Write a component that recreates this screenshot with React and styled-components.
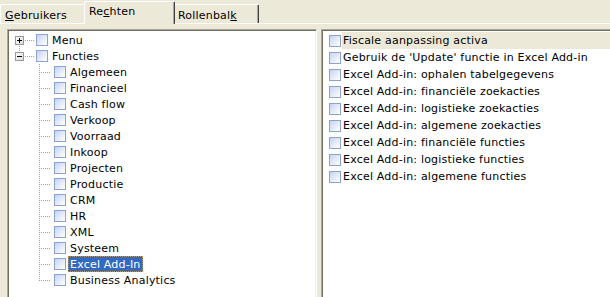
import React from "react";
import styled, { createGlobalStyle } from "styled-components";

const tabs = [
    { label: "Gebruikers", key: "G", pre: "", post: "ebruikers", width: 86 },
    { label: "Rechten", pre: "Re", key: "c", post: "hten", width: 91, active: true },
    { label: "Rollenbalk", pre: "Rollenbal", key: "k", post: "", width: 86 },
];

const functies = [
    "Algemeen",
    "Financieel",
    "Cash flow",
    "Verkoop",
    "Voorraad",
    "Inkoop",
    "Projecten",
    "Productie",
    "CRM",
    "HR",
    "XML",
    "Systeem",
    "Excel Add-In",
    "Business Analytics",
];

const rechten = [
    "Fiscale aanpassing activa",
    "Gebruik de 'Update' functie in Excel Add-in",
    "Excel Add-in: ophalen tabelgegevens",
    "Excel Add-in: financiële zoekacties",
    "Excel Add-in: logistieke zoekacties",
    "Excel Add-in: algemene zoekacties",
    "Excel Add-in: financiële functies",
    "Excel Add-in: logistieke functies",
    "Excel Add-in: algemene functies",
];

const GlobalStyle = createGlobalStyle`
    html, body {
        margin: 0;
        padding: 0;
        overflow: hidden;
        background: #ECE9D8;
    }
    body {
        font-family: "DejaVu Sans", Verdana, sans-serif;
        font-size: 11px;
        letter-spacing: 0.2px;
        color: #000;
    }
`;

const Page = styled.div`
    width: 620px;
    height: 297px;
    display: flex;
    flex-direction: column;
    background: #ECE9D8;
`;

const TabStrip = styled.div`
    height: 23px;
    display: flex;
    align-items: flex-start;
    flex: none;
`;

const Tab = styled.div`
    position: relative;
    box-sizing: border-box;
    width: ${(p) => p.$width}px;
    margin: ${(p) => (p.$active ? "1px -2px -1px" : "4px 0 0")};
    height: ${(p) => (p.$active ? 23 : 19)}px;
    padding: ${(p) => (p.$active ? "3px 0 0 4px" : "4px 0 0 4px")};
    background: #ECE9D8;
    border-top: 1px solid #FFFFFF;
    border-left: 1px solid #FFFFFF;
    border-right: 1px solid #404040;
    box-shadow: inset -1px 0 #ACA899;
    border-top-left-radius: 2px;
    border-top-right-radius: 2px;
    z-index: ${(p) => (p.$active ? 2 : 1)};
    line-height: 13px;
    white-space: nowrap;
`;

const TabPage = styled.div`
    flex: 1;
    display: flex;
    gap: 4px;
    padding: 5px 0 0 7px;
    border-top: 1px solid #FFFFFF;
    min-height: 0;
`;

const Sunken = styled.div`
    box-sizing: border-box;
    height: 290px;
    background: #FFFFFF;
    border: 1px solid;
    border-color: #ACA899 #FFFFFF #FFFFFF #ACA899;
    box-shadow: inset 1px 1px #716F64, inset -1px -1px #F1EFE2;
    padding: 2px 2px 0;
    overflow: hidden;
`;

const TreePanel = styled(Sunken)`
    width: 310px;
    flex: none;
`;

const ListPanel = styled(Sunken)`
    flex: 1;
`;

const TreeRow = styled.div`
    height: 16px;
    display: flex;
    align-items: center;
    padding-left: ${(p) => p.$indent}px;
`;

const dots = (dir) =>
    `repeating-linear-gradient(${dir}, #A0A0A0 0 1px, transparent 1px 2px)`;

const Gutter = styled.span`
    position: relative;
    flex: none;
    align-self: stretch;
    width: ${(p) => p.$w}px;
    &::before {
        content: "";
        position: absolute;
        left: ${(p) => p.$x}px;
        width: 1px;
        top: ${(p) => (p.$v === "down" ? 8 : 0)}px;
        height: ${(p) => (p.$v === "full" ? 16 : 8)}px;
        background: ${dots("to bottom")};
    }
    &::after {
        content: "";
        position: absolute;
        left: ${(p) => p.$x}px;
        top: 8px;
        height: 1px;
        width: ${(p) => p.$h}px;
        background: ${dots("to right")};
    }
`;

const Expander = styled.svg`
    position: absolute;
    left: ${(p) => p.$x - 4}px;
    top: 4px;
    z-index: 1;
`;

const Check = styled.span`
    box-sizing: border-box;
    flex: none;
    width: 12px;
    height: 12px;
    border: 1px solid #8AA3D4;
    background: linear-gradient(135deg, #C6D3F0 0%, #E4EAF8 50%, #FFFFFF 100%);
`;

const TreeLabel = styled.span`
    box-sizing: border-box;
    height: 16px;
    margin-left: 2px;
    padding: 1px 1px 0;
    line-height: 13px;
    white-space: nowrap;
    border: 1px ${(p) => (p.$selected ? "dotted #CE953A" : "solid transparent")};
    background: ${(p) => (p.$selected ? "#316AC5" : "transparent")};
    color: ${(p) => (p.$selected ? "#FFFFFF" : "#000000")};
`;

const ListRow = styled.div`
    height: 17px;
    display: flex;
    align-items: center;
    padding-left: 5px;
`;

const ListLabel = styled.span`
    flex: 1;
    align-self: stretch;
    margin-left: 1px;
    padding: 1px 0 0 1px;
    line-height: 16px;
    white-space: nowrap;
    background: ${(p) => (p.$hot ? "#ECE9D8" : "transparent")};
`;

function ExpanderBox({ x, open }) {
    const id = open ? "eg1" : "eg0";
    return (
        <Expander $x={x} width="9" height="9" viewBox="0 0 9 9">
            <defs>
                <linearGradient id={id} x1="0" y1="0" x2="1" y2="1">
                    <stop offset="0" stopColor="#FFFFFF" />
                    <stop offset="1" stopColor="#DCDACF" />
                </linearGradient>
            </defs>
            <rect x="0.5" y="0.5" width="8" height="8" fill={`url(#${id})`} stroke="#919B9C" />
            <rect x="2" y="4" width="5" height="1" fill="#000" />
            {!open && <rect x="4" y="2" width="1" height="5" fill="#000" />}
        </Expander>
    );
}

function App() {
    return (
        <Page>
            <GlobalStyle />
            <TabStrip>
                {tabs.map((t) => (
                    <Tab key={t.label} $width={t.width} $active={t.active}>
                        {t.pre}
                        <u>{t.key}</u>
                        {t.post}
                    </Tab>
                ))}
            </TabStrip>
            <TabPage>
                <TreePanel>
                    <TreeRow $indent={0}>
                        <Gutter $w={26} $x={9} $v="down" $h={15}>
                            <ExpanderBox x={9} />
                        </Gutter>
                        <Check />
                        <TreeLabel>Menu</TreeLabel>
                    </TreeRow>
                    <TreeRow $indent={0}>
                        <Gutter $w={26} $x={9} $v="up" $h={15}>
                            <ExpanderBox x={9} open />
                        </Gutter>
                        <Check />
                        <TreeLabel>Functies</TreeLabel>
                    </TreeRow>
                    {functies.map((f, i) => (
                        <TreeRow key={f} $indent={18}>
                            <Gutter
                                $w={26}
                                $x={11}
                                $v={i === functies.length - 1 ? "up" : "full"}
                                $h={11}
                            />
                            <Check />
                            <TreeLabel $selected={f === "Excel Add-In"}>{f}</TreeLabel>
                        </TreeRow>
                    ))}
                </TreePanel>
                <ListPanel>
                    {rechten.map((r, i) => (
                        <ListRow key={r}>
                            <Check />
                            <ListLabel $hot={i === 0}>{r}</ListLabel>
                        </ListRow>
                    ))}
                </ListPanel>
            </TabPage>
        </Page>
    );
}

export default App;
